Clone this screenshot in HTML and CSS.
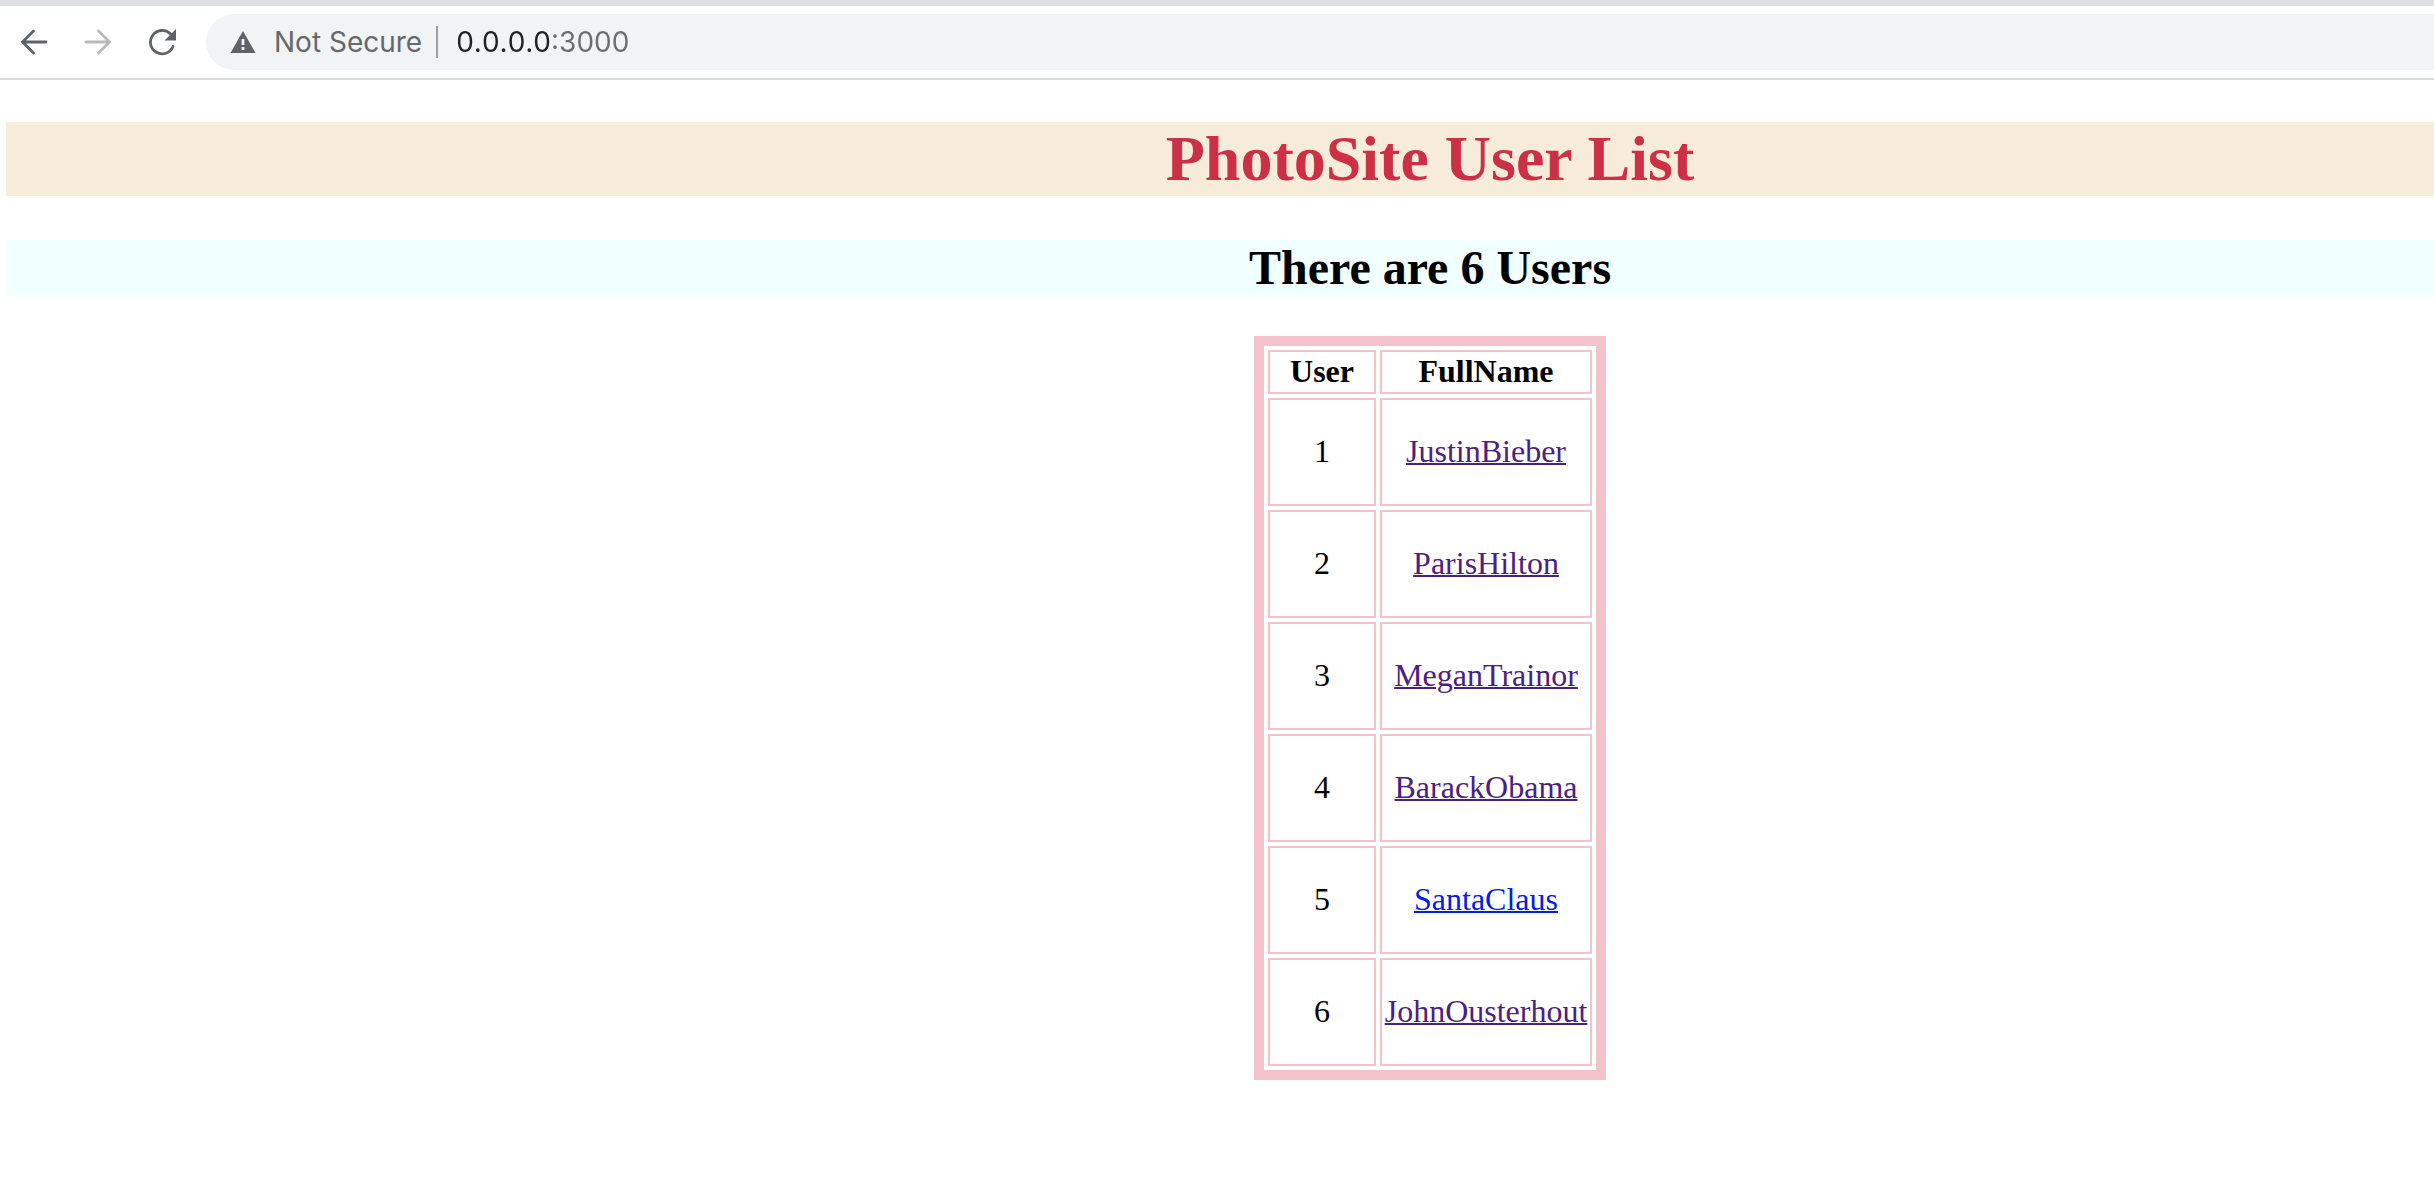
FILE: index.html
```html
<!DOCTYPE html>
<html lang="en">
<head>
<meta charset="utf-8">
<title>PhotoSite User List</title>
<link rel="stylesheet" href="styles.css">
</head>
<body>
<header class="toolbar">
  <nav class="nav-buttons">
    <button class="icon-button" type="button" aria-label="Back">
      <svg width="28" height="28" viewBox="0 0 28 28" fill="none" stroke="#5f6368" stroke-width="2.8" stroke-linecap="round"><path d="M26 14H3M13.500 3L2.500 14l11 11"/></svg>
    </button>
    <button class="icon-button" type="button" aria-label="Forward" disabled>
      <svg width="28" height="28" viewBox="0 0 28 28" fill="none" stroke="#bababc" stroke-width="2.8" stroke-linecap="round"><path d="M2 14h23M14.500 3l11 11-11 11"/></svg>
    </button>
    <button class="icon-button" type="button" aria-label="Reload">
      <svg width="28" height="28" viewBox="0 0 28 28"><path d="M25 18.500A11.700 11.700 0 1 1 22.500 6" fill="none" stroke="#5f6368" stroke-width="2.800" stroke-linecap="round"/><path d="M28 1v11.500h-11.500z" fill="#5f6368"/></svg>
    </button>
  </nav>
  <form class="address">
    <button class="security" type="button">
      <svg width="26" height="24" viewBox="0 0 26 24"><path d="M13 1L25.500 23H.5z" fill="#5f6368"/><path d="M11.600 9h2.800v6h-2.800zM11.600 17h2.800v3h-2.800z" fill="#f1f3f4"/></svg>
      <span>Not Secure</span>
    </button>
    <input class="url" type="text" aria-label="Address" value="0.0.0.0:3000">
  </form>
</header>
<main class="page">
  <h1 class="title">PhotoSite User List</h1>
  <h2 class="count">There are 6 Users</h2>
  <div class="list">
    <table class="users">
      <thead>
        <tr><th scope="col">User</th><th scope="col">FullName</th></tr>
      </thead>
      <tbody>
        <tr><td>1</td><td><a class="visited" href="#1">JustinBieber</a></td></tr>
        <tr><td>2</td><td><a class="visited" href="#2">ParisHilton</a></td></tr>
        <tr><td>3</td><td><a class="visited" href="#3">MeganTrainor</a></td></tr>
        <tr><td>4</td><td><a class="visited" href="#4">BarackObama</a></td></tr>
        <tr><td>5</td><td><a href="#5">SantaClaus</a></td></tr>
        <tr><td>6</td><td><a class="visited" href="#6">JohnOusterhout</a></td></tr>
      </tbody>
    </table>
  </div>
</main>
</body>
</html>
```

FILE: styles.css
```css
* {
  box-sizing: border-box;
}

body {
  margin: 0;
  background: #fff;
  color: #000;
  font-family: "Liberation Serif", "Times New Roman", serif;
  font-size: 32px;
}

.toolbar {
  display: flex;
  align-items: center;
  gap: 30px;
  height: 80px;
  padding-left: 20px;
  border-top: 6px solid #dee0e4;
  border-bottom: 2px solid #dadbe0;
  font-family: Inter, "Liberation Sans", sans-serif;
  font-size: 28px;
}

.nav-buttons {
  display: flex;
  gap: 36px;
}

.icon-button {
  display: flex;
  padding: 0;
  border: 0;
  background: none;
}

.address {
  display: flex;
  flex: 1;
  align-items: center;
  gap: 18px;
  height: 56px;
  padding-left: 24px;
  border-radius: 28px 0 0 28px;
  background: #f1f3f4;
}

.security {
  display: flex;
  align-items: center;
  gap: 18px;
  height: 32px;
  padding: 0 14px 0 0;
  border: 0;
  border-right: 2px solid #9c9ea1;
  background: none;
  color: #66686b;
  font: inherit;
}

/* The host is dark, the port that follows it is grey. */
.url {
  flex: 1;
  height: 40px;
  padding: 0;
  border: 0;
  outline: 0;
  background: linear-gradient(90deg, #202124 96px, #6b6d70 96px);
  background-clip: text;
  -webkit-background-clip: text;
  -webkit-text-fill-color: transparent;
  color: #202124;
  font: inherit;
  font-kerning: none;
}

.page {
  padding: 42px 0 0 6px;
}

/* Everything is centred to the right of a wide left inset. */
.title,
.count,
.list {
  margin: 0;
  padding-left: 420px;
  text-align: center;
}

.title {
  margin-bottom: 44px;
  background: #f7ebda;
  color: #cc3044;
  font-size: 64px;
  line-height: 74px;
}

.count {
  margin-bottom: 40px;
  background: #f1ffff;
  font-size: 48px;
  line-height: 56px;
}

.users {
  margin: 0 auto;
  border: 10px solid #f4c2cb;
  border-spacing: 4px;
  line-height: 36px;
}

.users th,
.users td {
  min-width: 108px;
  padding: 1px 2px 3px;
  border: 2px solid #f4c2cb;
}

.users th:last-child {
  min-width: 212px;
}

.users td {
  height: 108px;
}

.users a {
  color: #001ee6;
  text-decoration-thickness: 2px;
}

.users .visited {
  color: #4b2084;
}
```
